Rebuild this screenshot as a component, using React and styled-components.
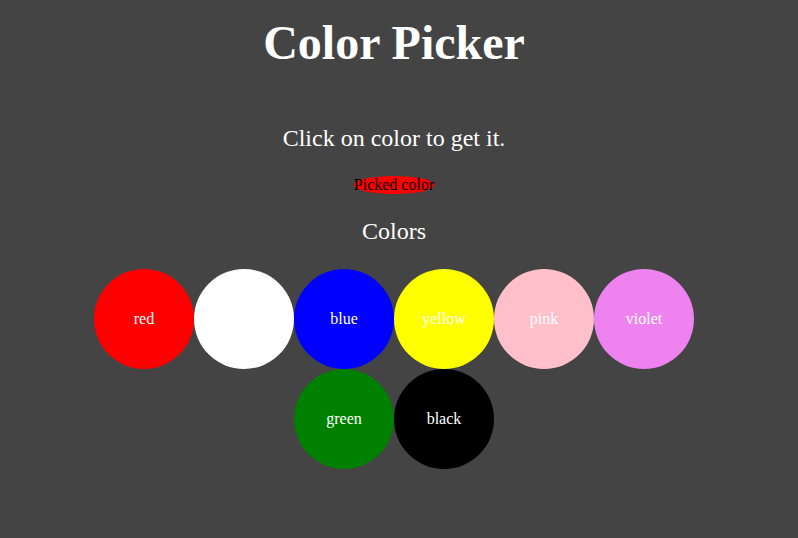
import React from "react";
import styled, { createGlobalStyle } from "styled-components";

const Global = createGlobalStyle`
  html, body {
    margin: 0;
    padding: 0;
    background: #444444;
  }
  body {
    font-family: "Liberation Serif", "Times New Roman", serif;
    color: #ffffff;
  }
`;

const Page = styled.div`
  width: 788px;
  display: flex;
  flex-direction: column;
  align-items: center;
  text-align: center;
`;

const Title = styled.h1`
  margin: 15px 0 0;
  font-size: 48px;
  font-weight: bold;
  line-height: normal;
`;

const Instruction = styled.p`
  margin: 55px 0 0;
  font-size: 24px;
  line-height: normal;
`;

const Picked = styled.div`
  margin-top: 23.5px;
  display: inline-block;
  font-size: 16px;
  line-height: normal;
  color: #000000;
  background: ${(p) => p.$color};
  border-radius: 50%;
`;

const Heading = styled.h2`
  margin: 24.5px 0 0;
  font-size: 24px;
  font-weight: normal;
  line-height: normal;
`;

const Swatches = styled.div`
  margin-top: 24px;
  width: 600px;
  display: flex;
  flex-wrap: wrap;
  justify-content: center;
`;

const Swatch = styled.div`
  width: 100px;
  height: 100px;
  border-radius: 50%;
  background: ${(p) => p.$color};
  color: #ffffff;
  font-size: 16px;
  display: flex;
  align-items: center;
  justify-content: center;
  cursor: pointer;
`;

const colors = ["red", "white", "blue", "yellow", "pink", "violet", "green", "black"];

export default function App() {
  const [picked, setPicked] = React.useState("red");
  return (
    <>
      <Global />
      <Page>
        <Title>Color Picker</Title>
        <Instruction>Click on color to get it.</Instruction>
        <Picked $color={picked}>Picked color</Picked>
        <Heading>Colors</Heading>
        <Swatches>
          {colors.map((c) => (
            <Swatch key={c} $color={c} onClick={() => setPicked(c)}>
              {c}
            </Swatch>
          ))}
        </Swatches>
      </Page>
    </>
  );
}
